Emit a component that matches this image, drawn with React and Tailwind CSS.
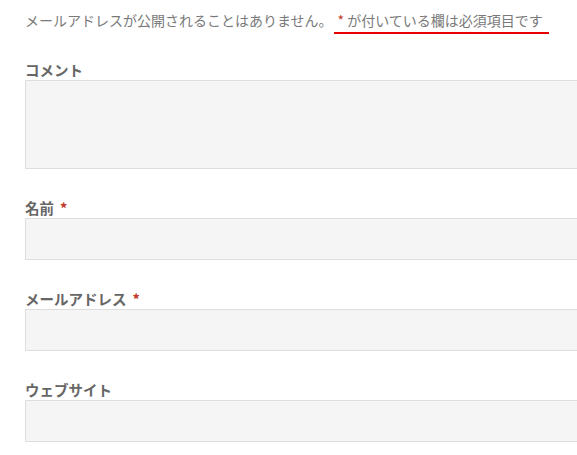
const FONT = { fontFamily: '"Noto Sans CJK JP", "Noto Sans", sans-serif' };

function Field({ label, required, tall }) {
  return (
    <div className="flex flex-col">
      <label className="h-5 text-[14.5px] font-bold leading-5 text-[#666]">
        {label}
        {required && <span className="ml-1.5 text-[#c0392b]">*</span>}
      </label>
      <div className={`w-[620px] border border-[#dedede] bg-[#f5f5f5] ${tall ? "h-[89px]" : "h-[42px]"}`} />
    </div>
  );
}

export default function App() {
  return (
    <div className="h-[455px] w-[577px] overflow-hidden bg-white pl-[25px] pt-2" style={FONT}>
      <p className="h-[52px] text-[14px] leading-6 text-[#7a7a7a]">
        メールアドレスが公開されることはありません。
        <span className="ml-px inline-block h-[26px] border-b-2 border-[#e60000] pl-1 pr-1.5">
          <span className="text-[#c0392b]">*</span> が付いている欄は必須項目です
        </span>
      </p>
      <div className="flex flex-col gap-[29px]">
        <Field label="コメント" tall />
        <Field label="名前" required />
        <Field label="メールアドレス" required />
        <Field label="ウェブサイト" />
      </div>
    </div>
  );
}
